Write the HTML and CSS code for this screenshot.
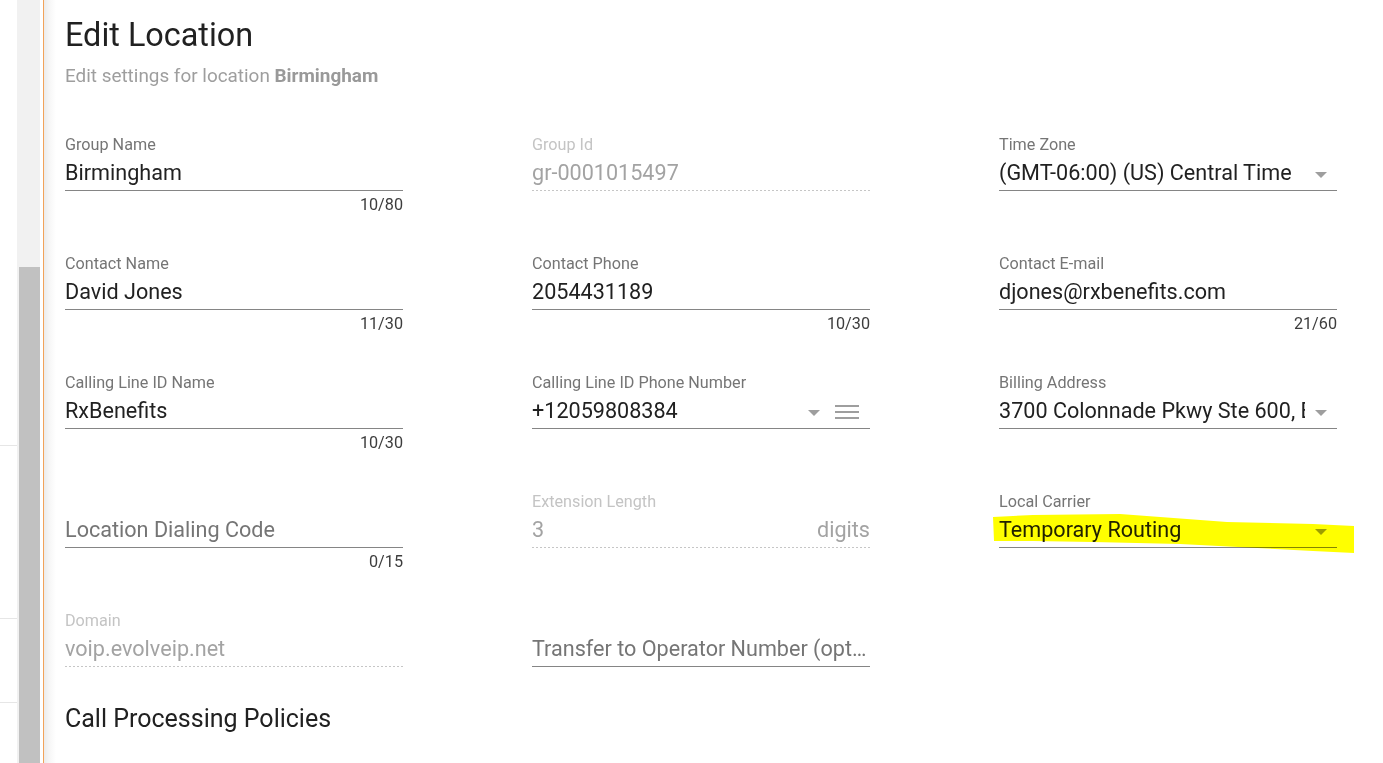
FILE: index.html
```html
<!DOCTYPE html>
<html lang="en">
<head>
<meta charset="utf-8">
<title>Edit Location</title>
<link rel="stylesheet" href="styles.css">
</head>
<body>
<div class="app">
  <aside class="side">
    <div class="side-block b1"></div>
    <div class="side-block b2"></div>
    <div class="side-block b3"></div>
  </aside>
  <div class="track"><div class="thumb"></div></div>
  <div class="spacer"></div>
  <main class="main">
    <h1 class="title">Edit Location</h1>
    <p class="subtitle">Edit settings for location <b>Birmingham</b></p>

    <div class="grid">
      <!-- row 1 -->
      <div class="field">
        <div class="label">Group Name</div>
        <div class="control"><span class="value">Birmingham</span></div>
        <div class="counter">10/80</div>
      </div>
      <div class="field">
        <div class="label disabled">Group Id</div>
        <div class="control disabled"><span class="value">gr-0001015497</span></div>
      </div>
      <div class="field">
        <div class="label">Time Zone</div>
        <div class="control select"><span class="value">(GMT-06:00) (US) Central Time</span><span class="arrow"></span></div>
      </div>

      <!-- row 2 -->
      <div class="field">
        <div class="label">Contact Name</div>
        <div class="control"><span class="value">David Jones</span></div>
        <div class="counter">11/30</div>
      </div>
      <div class="field">
        <div class="label">Contact Phone</div>
        <div class="control"><span class="value">2054431189</span></div>
        <div class="counter">10/30</div>
      </div>
      <div class="field">
        <div class="label">Contact E-mail</div>
        <div class="control"><span class="value">djones@rxbenefits.com</span></div>
        <div class="counter">21/60</div>
      </div>

      <!-- row 3 -->
      <div class="field">
        <div class="label">Calling Line ID Name</div>
        <div class="control"><span class="value">RxBenefits</span></div>
        <div class="counter">10/30</div>
      </div>
      <div class="field">
        <div class="label">Calling Line ID Phone Number</div>
        <div class="control select">
          <span class="value">+12059808384</span>
          <span class="arrow arrow-menu"></span>
          <svg class="menu" width="24" height="16" viewBox="0 0 24 16" aria-hidden="true">
            <rect x="0" y="1" width="24" height="2" fill="#9e9e9e"/>
            <rect x="0" y="7" width="24" height="2" fill="#9e9e9e"/>
            <rect x="0" y="13" width="24" height="2" fill="#9e9e9e"/>
          </svg>
        </div>
      </div>
      <div class="field">
        <div class="label">Billing Address</div>
        <div class="control select"><span class="value clip">3700 Colonnade Pkwy Ste 600, Birmingham, AL 35243</span><span class="arrow"></span></div>
      </div>

      <!-- row 4 -->
      <div class="field">
        <div class="label"></div>
        <div class="control"><span class="value placeholder">Location Dialing Code</span></div>
        <div class="counter">0/15</div>
      </div>
      <div class="field">
        <div class="label disabled">Extension Length</div>
        <div class="control disabled"><span class="value">3</span><span class="suffix">digits</span></div>
      </div>
      <div class="field">
        <div class="label">Local Carrier</div>
        <div class="control select"><span class="value">Temporary Routing</span><span class="arrow"></span></div>
        <svg class="highlight" width="362" height="40" viewBox="0 0 362 40" aria-hidden="true">
          <polygon points="0,3 40,1 127,0 234,8 320,10 361,12 361,39 320,37 187,30 100,28 40,27 1,27" fill="#ffff00"/>
        </svg>
      </div>

      <!-- row 5 -->
      <div class="field">
        <div class="label disabled">Domain</div>
        <div class="control disabled"><span class="value">voip.evolveip.net</span></div>
      </div>
      <div class="field">
        <div class="label"></div>
        <div class="control"><span class="value placeholder ellipsis">Transfer to Operator Number (optional)</span></div>
      </div>
      <div class="field empty"></div>
    </div>

    <h2 class="section">Call Processing Policies</h2>
  </main>
</div>
</body>
</html>
```

FILE: styles.css
```css
* { box-sizing: content-box; }

html, body {
  margin: 0;
  padding: 0;
  height: 763px;
  overflow: hidden;
  background: #fff;
  font-family: Roboto, "Noto Sans", "Liberation Sans", sans-serif;
}

.app {
  display: flex;
  height: 763px;
}

/* partially visible left panel */
.side {
  width: 17px;
  flex: none;
  display: flex;
  flex-direction: column;
  background: #fff;
}
.side-block { border-bottom: 1px solid #e6e6e6; }
.b1 { height: 445px; }
.b2 { height: 172px; }
.b3 { height: 83px; }

/* scrollbar */
.track {
  width: 21px;
  flex: none;
  background: #f1f1f1;
  padding-left: 2px;
  display: flex;
  flex-direction: column;
}
.thumb {
  margin-top: 267px;
  flex: 1;
  background: #c1c1c1;
}
.spacer { width: 3px; flex: none; background: #fff; }

/* main dialog area */
.main {
  flex: 1;
  border-left: 1px solid #f2a35a;
  padding: 15px 0 0 21px;
  background: linear-gradient(to right, #ececec 0, #f6f6f6 5px, #fff 12px);
}

.title {
  margin: 0;
  font-size: 32.4px;
  line-height: 40px;
  font-weight: 400;
  color: #212121;
}

.subtitle {
  margin: 9px 0 0;
  font-size: 18.9px;
  line-height: 24px;
  color: #9e9e9e;
}
.subtitle b { font-weight: 700; color: #999; }

.grid {
  margin-top: 46px;
  display: grid;
  grid-template-columns: repeat(3, 338px);
  grid-template-rows: repeat(4, 119px) auto;
  column-gap: 129px;
}

.field {
  position: relative;
  display: flex;
  flex-direction: column;
}

.label {
  height: 20px;
  line-height: 22px;
  font-size: 16.2px;
  color: #757575;
  margin-bottom: 4px;
  white-space: nowrap;
}
.label.disabled { color: #c4c4c4; }

.control {
  display: flex;
  align-items: center;
  height: 26px;
  line-height: 28px;
  padding-top: 2px;
  padding-bottom: 4px;
  border-bottom: 1px solid #858585;
  font-size: 21.6px;
  color: #212121;
}
.control.disabled {
  color: #a3a3a3;
  border-bottom: 1px solid transparent;
  background-image: linear-gradient(to right, #c6c6c6 50%, transparent 50%);
  background-size: 4px 1px;
  background-repeat: repeat-x;
  background-origin: border-box;
  background-position: left bottom;
}

.value {
  flex: 1;
  min-width: 0;
  white-space: nowrap;
  overflow: hidden;
}
.value.placeholder { color: #757575; }
.value.ellipsis { text-overflow: ellipsis; }
.value.clip { margin-right: 10px; }

.suffix { color: #a3a3a3; flex: none; }

.arrow {
  flex: none;
  width: 0;
  height: 0;
  margin-top: 3px;
  margin-right: 10px;
  border-left: 6.5px solid transparent;
  border-right: 6.5px solid transparent;
  border-top: 6.5px solid #9e9e9e;
}
.arrow.arrow-menu { margin-right: 15px; }

.menu {
  flex: none;
  margin-right: 11px;
  margin-top: 1px;
}

.counter {
  margin-top: 4px;
  text-align: right;
  font-size: 16.2px;
  line-height: 20px;
  color: #3d3d3d;
}

/* hand-drawn highlighter annotation */
.highlight {
  position: absolute;
  left: -6px;
  top: 23px;
  mix-blend-mode: multiply;
  pointer-events: none;
}

.section {
  margin: 36px 0 0;
  font-size: 25px;
  line-height: 32px;
  font-weight: 400;
  color: #212121;
}
```
